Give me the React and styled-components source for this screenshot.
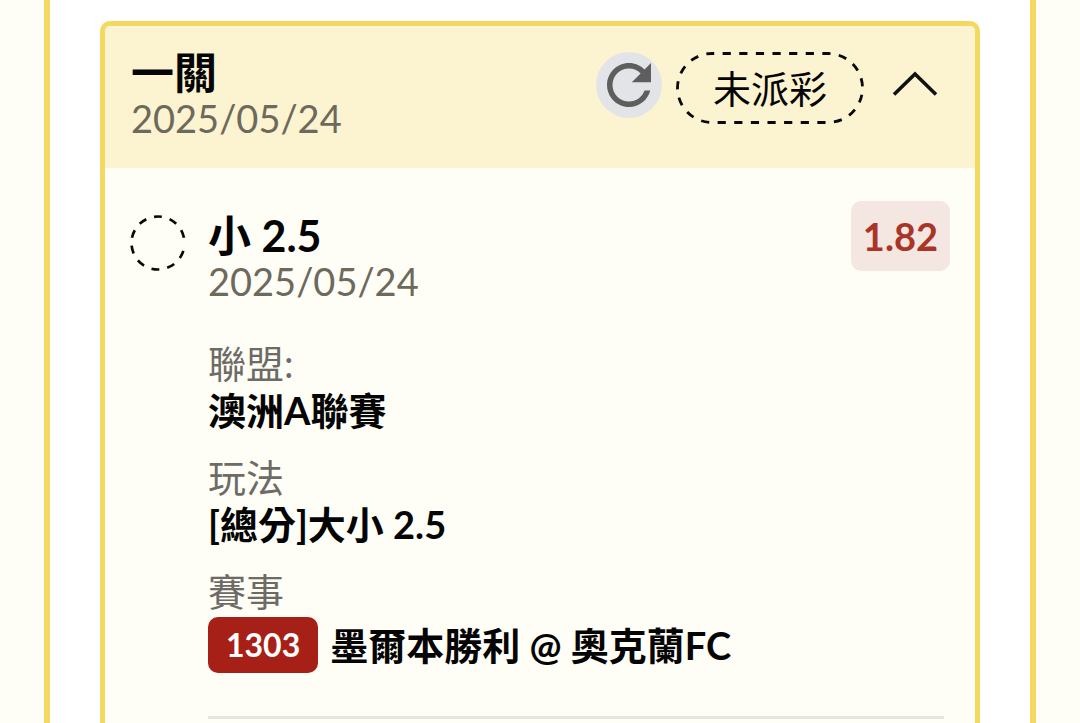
import React, { useState } from "react";
import styled, { createGlobalStyle } from "styled-components";

const GlobalStyle = createGlobalStyle`
  *, *::before, *::after { box-sizing: border-box; }
  body {
    margin: 0;
    background: #fffef6;
    color: #050505;
    font-family: Lato, "Noto Sans CJK TC", sans-serif;
    font-size: 38px;
    line-height: 46px;
  }
  h2, h3, p, dl, dt, dd { margin: 0; font: inherit; }
`;

const Panel = styled.main`
  display: flex;
  flex-direction: column;
  min-height: 100vh;
  margin: 0 44px;
  padding: 21px 50px 0;
  background: #fff;
  border: solid #f3d95f;
  border-width: 0 6px;
`;

const Card = styled.article`
  flex: 1;
  background: #fffef6;
  border: 5px solid #f3d95f;
  border-bottom: 0;
  border-radius: 10px 10px 0 0;
  overflow: hidden;
`;

const CardHeader = styled.header`
  display: flex;
  align-items: flex-start;
  justify-content: space-between;
  padding: 24px 27px 27px 26px;
  background: #fcf3d0;
`;

const Title = styled.h2`
  && { font-size: 43px; font-weight: 700; line-height: 45px; }
`;

const DateText = styled.p`
  color: #6d695c;
`;

const Actions = styled.div`
  display: flex;
  align-items: flex-start;
  padding-top: 2px;
`;

const IconButton = styled.button`
  display: grid;
  place-items: center;
  width: 66px;
  height: 66px;
  padding: 0;
  border: 0;
  border-radius: 50%;
  color: ${(p) => (p.$filled ? "#5e5e5e" : "#111")};
  background: ${(p) => (p.$filled ? "#e3e4e7" : "transparent")};
  cursor: pointer;
`;

const Status = styled.span`
  position: relative;
  display: grid;
  place-items: center;
  width: 188px;
  height: 72px;
  margin: 0 18px 0 14px;
`;

const Outline = styled.svg`
  position: absolute;
  inset: 0;
`;

const Bet = styled.section`
  display: flex;
  align-items: flex-start;
  gap: 22px;
  padding: 33px 25px 0;
`;

const Ring = styled.svg`
  flex: none;
  margin-top: 14px;
`;

const BetMain = styled.div`
  flex: 1;
  min-width: 0;
`;

const BetTop = styled.div`
  display: flex;
  align-items: flex-start;
  justify-content: space-between;
`;

const BetHeading = styled.div`
  padding-top: 12px;
`;

const Odds = styled.strong`
  padding: 12px;
  border-radius: 10px;
  background: #f4e6e0;
  color: #a93427;
  font-weight: 700;
`;

const Fields = styled.dl`
  display: grid;
  gap: 20px;
  margin-top: 36px;
`;

const Label = styled.dt`
  color: #6d6b66;
`;

const Value = styled.dd`
  display: flex;
  align-items: center;
  gap: 12px;
  padding-top: ${(p) => (p.$tagged ? "3px" : "0")};
  line-height: 48px;
  && { font-weight: 700; }
`;

const MatchNo = styled.span`
  padding: 4px 18px;
  border-radius: 10px;
  background: #a62018;
  color: #fff;
  font-size: 32px;
`;

const Divider = styled.hr`
  height: 3px;
  margin: 43px 6px 0 0;
  border: 0;
  background: #e6e4de;
`;

function Field({ label, tag, children }) {
  return (
    <div>
      <Label>{label}</Label>
      <Value $tagged={Boolean(tag)}>
        {tag && <MatchNo>{tag}</MatchNo>}
        <span>{children}</span>
      </Value>
    </div>
  );
}

export default function App() {
  const [open, setOpen] = useState(true);
  return (
    <>
      <GlobalStyle />
      <Panel>
        <Card>
          <CardHeader>
            <div>
              <Title>一關</Title>
              <DateText>2025/05/24</DateText>
            </div>
            <Actions>
              <IconButton $filled type="button" aria-label="重新整理">
                <svg width="66" height="66" viewBox="0 0 24 24" fill="currentColor" aria-hidden="true">
                  <path d="M17.65 6.35C16.2 4.9 14.21 4 12 4c-4.42 0-7.99 3.58-7.99 8s3.57 8 7.99 8c3.73 0 6.84-2.55 7.73-6h-2.08c-.82 2.33-3.04 4-5.65 4-3.31 0-6-2.69-6-6s2.69-6 6-6c1.66 0 3.14.69 4.22 1.78L13 11h7V4l-2.35 2.35z" />
                </svg>
              </IconButton>
              <Status>
                <Outline width="188" height="72" viewBox="0 0 188 72" fill="none" aria-hidden="true">
                  <path
                    d="M36 1.5H152A34.5 34.5 0 0 1 152 70.5H36A34.5 34.5 0 0 1 36 1.5Z"
                    stroke="#080808" strokeWidth="2.8" strokeDasharray="8.2 8.42" strokeDashoffset="6"
                  />
                </Outline>
                未派彩
              </Status>
              <IconButton type="button" aria-label="收合" aria-expanded={open} onClick={() => setOpen(!open)}>
                <svg width="46" height="28" viewBox="0 0 46 28" fill="none" stroke="currentColor" strokeWidth="3.6" aria-hidden="true">
                  <path d={open ? "M2 23.5 23 3 44 23.5" : "M2 4.5 23 25 44 4.5"} />
                </svg>
              </IconButton>
            </Actions>
          </CardHeader>
          {open && (
            <Bet>
              <Ring width="56" height="56" viewBox="0 0 56 56" fill="none" aria-hidden="true">
                <circle cx="28" cy="28" r="26.5" stroke="#080808" strokeWidth="2.7" strokeDasharray="8 8" strokeDashoffset="8" />
              </Ring>
              <BetMain>
                <BetTop>
                  <BetHeading>
                    <Title as="h3">小 2.5</Title>
                    <DateText>2025/05/24</DateText>
                  </BetHeading>
                  <Odds>1.82</Odds>
                </BetTop>
                <Fields>
                  <Field label="聯盟:">澳洲A聯賽</Field>
                  <Field label="玩法">[總分]大小 2.5</Field>
                  <Field label="賽事" tag="1303">墨爾本勝利 @ 奧克蘭FC</Field>
                </Fields>
                <Divider />
              </BetMain>
            </Bet>
          )}
        </Card>
      </Panel>
    </>
  );
}
